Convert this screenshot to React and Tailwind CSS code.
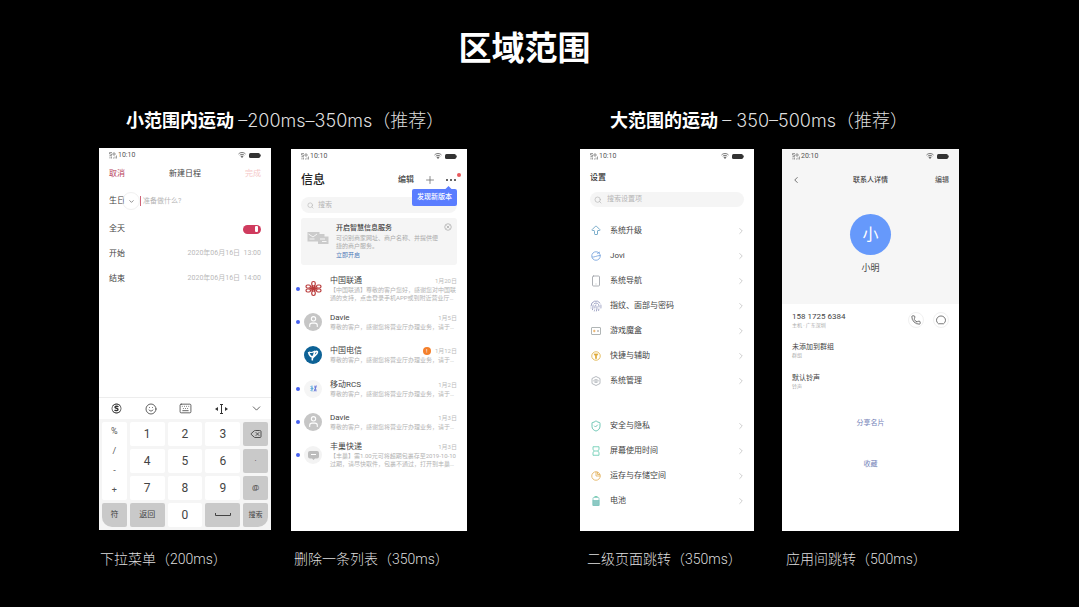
import React from "react";
import {
  Search, Plus, ChevronDown, ChevronRight, ChevronLeft, Smile, Keyboard, Delete, Phone,
  ArrowBigUp, Smartphone, Fingerprint, ShieldCheck, User,
} from "lucide-react";

const FONT = "font-['Inter','Noto_Sans_CJK_SC',sans-serif]";
const PHONE_FONT = "font-['Roboto','Noto_Sans_CJK_SC',sans-serif]";

function StatusBar({ time }) {
  return (
    <div className="flex h-[14px] items-center justify-between px-[10px] text-[7px] leading-none text-[#555]">
      <div className="flex items-center gap-px">
        <svg className="h-[7px] w-[8px]" viewBox="0 0 16 14" fill="none" stroke="#777" strokeWidth="1.4" aria-hidden="true">
          <path d="M1 1h5M1 1v3h4v3H1M8 2h4v4H8zM2 9v4M5 9v4M9 11v2M12 9v4M15 7v6" />
        </svg>
        <span>{time}</span>
      </div>
      <div className="flex items-center gap-[3px]">
        <svg className="h-[6px] w-[8px]" viewBox="0 0 16 12" fill="none" stroke="#555" strokeWidth="1.6" aria-hidden="true">
          <path d="M1 4C5 0 11 0 15 4M3.500 6.500c3-2.500 6-2.500 9 0" />
          <path d="M6 9l2 2 2-2c-1-1-3-1-4 0z" fill="#555" />
        </svg>
        <svg className="h-[5px] w-[12px]" viewBox="0 0 24 10" aria-hidden="true">
          <rect x="0" y="0" width="22" height="10" rx="3" fill="#333" />
          <rect x="22.500" y="3" width="1.500" height="4" fill="#333" />
        </svg>
      </div>
    </div>
  );
}

function Screen({ children, caption, indent, first }) {
  return (
    <figure className={`flex min-w-0 flex-col ${first ? "gap-[18px]" : "gap-[17px] pt-px"}`}>
      <div className={`${PHONE_FONT} flex min-h-[382px] flex-1 flex-col bg-white text-[8px] text-[#444]`}>{children}</div>
      <figcaption className={`${indent} ${PHONE_FONT} text-[14px] leading-[22px] font-light whitespace-nowrap text-[#dedede]`}>{caption}</figcaption>
    </figure>
  );
}

function CandidateIcon() {
  return (
    <svg className="h-[11px] w-[11px]" viewBox="0 0 22 22" fill="none" stroke="#333" aria-hidden="true">
      <circle cx="11" cy="11" r="9" strokeWidth="1.500" />
      <path d="M3 6c4-5 12-5 16 0M3 16c4 5 12 5 16 0" strokeWidth="1.500" />
      <path d="M15 7.500c-3-2-7-1-7 1s6 2 6 4.500-5 3-7 1" strokeWidth="2.800" />
    </svg>
  );
}

const KEY = "flex items-center justify-center rounded-[2px] h-6";
const WHITE = "bg-white text-[12px] text-[#444]";
const GREY = "bg-[#c9c9c9] text-[8px] text-[#444]";

function Keypad() {
  return (
    <div className="grid grid-cols-[25fr_35fr_35fr_35fr_25fr] gap-[3px] bg-[#f5f5f5] p-[3px]">
      <div className="row-span-3 flex flex-col justify-around rounded-[2px] bg-white text-[9px] leading-none text-[#555]">
        {["%", "/", "-", "+"].map((s) => (
          <button key={s} type="button">{s}</button>
        ))}
      </div>
      {["1", "2", "3"].map((n) => <button key={n} type="button" className={`${KEY} ${WHITE}`}>{n}</button>)}
      <button type="button" aria-label="删除" className={`${KEY} ${GREY}`}><Delete size={12} strokeWidth={1.8} /></button>
      {["4", "5", "6"].map((n) => <button key={n} type="button" className={`${KEY} ${WHITE}`}>{n}</button>)}
      <button type="button" className={`${KEY} ${GREY}`}>·</button>
      {["7", "8", "9"].map((n) => <button key={n} type="button" className={`${KEY} ${WHITE}`}>{n}</button>)}
      <button type="button" className={`${KEY} ${GREY}`}>@</button>
      <button type="button" className={`${KEY} ${GREY} rounded-bl-[10px]`}>符</button>
      <button type="button" className={`${KEY} ${GREY}`}>返回</button>
      <button type="button" className={`${KEY} ${WHITE}`}>0</button>
      <button type="button" aria-label="空格" className={`${KEY} ${GREY}`}>
        <svg className="h-[4px] w-4" viewBox="0 0 16 4" fill="none" stroke="#444" aria-hidden="true"><path d="M.5 0v2.500h15V0" /></svg>
      </button>
      <button type="button" className="flex h-6 items-center justify-center rounded-[2px] rounded-br-[10px] bg-[#c9c9c9] text-[7px] text-[#444]">搜索</button>
    </div>
  );
}

function CalendarScreen() {
  return (
    <>
      <StatusBar time="10:10" />
      <div className="grid h-[23px] grid-cols-3 items-center px-[10px]">
        <button type="button" className="justify-self-start text-[#b8425c]">取消</button>
        <h3 className="justify-self-center">新建日程</h3>
        <button type="button" className="justify-self-end text-[#f5c9c9]">完成</button>
      </div>
      <div className="flex h-8 items-center px-[10px]">
        <span>生日</span>
        <button type="button" aria-label="选择类型" className="-ml-[3px] flex h-[18px] w-[18px] items-center justify-center rounded-full border border-[#f1f1f1]">
          <ChevronDown size={7} />
        </button>
        <input aria-label="日程内容" placeholder="准备做什么?" className="h-[10px] min-w-0 flex-1 border-l border-[#cf6478] pl-[2px] text-[7px] outline-none placeholder:text-[#b5b5b5]" />
      </div>
      <label className="flex h-6 items-center justify-between px-[10px]">
        <span>全天</span>
        <span className="flex h-[9px] w-[18px] items-center justify-end rounded-full bg-[#cf3b5e] px-[3px]">
          <input type="checkbox" role="switch" defaultChecked className="h-[6px] w-[3px] appearance-none rounded-[1px] bg-white" />
        </span>
      </label>
      {[["开始", "2020年06月16日  13:00"], ["结束", "2020年06月16日  14:00"]].map(([k, v]) => (
        <div key={k} className="flex h-[25px] items-center justify-between px-[10px]">
          <span>{k}</span>
          <time className="text-[7px] whitespace-pre text-[#b9b9b9]">{v}</time>
        </div>
      ))}
      <div className="mt-auto">
        <div className="flex h-[22px] items-center justify-between border-t border-[#ededed] pr-[8px] pl-3 text-[#444]">
          <CandidateIcon />
          <Smile size={12} strokeWidth={1.7} />
          <Keyboard size={13} strokeWidth={1.5} />
          <svg className="h-[10px] w-[13px]" viewBox="0 0 13 10" aria-hidden="true">
            <path d="M5 .5h3M5 9.500h3M6.500.5v9" stroke="#333" fill="none" />
            <path d="M0 5l3-2v4zM13 5l-3-2v4z" fill="#333" />
          </svg>
          <ChevronDown size={13} strokeWidth={1.5} />
        </div>
        <Keypad />
      </div>
    </>
  );
}

function UnicomMark() {
  return (
    <svg className="h-[17px] w-[17px]" viewBox="0 0 34 34" fill="none" stroke="#b93a3a" strokeWidth="2.400" aria-hidden="true">
      <rect x="13.500" y="3" width="7" height="9" rx="3.500" /><rect x="13.500" y="22" width="7" height="9" rx="3.500" />
      <rect x="2" y="10" width="9" height="6" rx="3" /><rect x="23" y="10" width="9" height="6" rx="3" />
      <rect x="2" y="18" width="9" height="6" rx="3" /><rect x="23" y="18" width="9" height="6" rx="3" />
      <path d="M11 13l6 4 6-4M11 21l6-4 6 4M14 11l3 6 3-6M14 23l3-6 3 6M9 17h16" />
    </svg>
  );
}

function TelecomMark() {
  return (
    <svg className="h-[18px] w-[18px]" viewBox="0 0 36 36" aria-hidden="true">
      <circle cx="18" cy="18" r="18" fill="#0d6296" />
      <path d="M9 12c2 8 6 11 9 9 3-2 1-6 4-9 2-2 5-2 5 0 0 4-4 6-9 11-2 2-2 4-1 6" fill="none" stroke="#fff" strokeWidth="3.200" />
      <path d="M10 12c4 2 8 1 12-2" fill="none" stroke="#fff" strokeWidth="2.400" />
    </svg>
  );
}

function Avatar({ kind }) {
  if (kind === "unicom") return <UnicomMark />;
  if (kind === "telecom") return <TelecomMark />;
  if (kind === "user")
    return (
      <span className="flex h-[18px] w-[18px] items-center justify-center rounded-full bg-[#c6c6c6] text-white"><User size={13} strokeWidth={2} /></span>
    );
  if (kind === "rcs")
    return (
      <span className="flex h-[18px] w-[18px] items-center justify-center rounded-full bg-[#f5f5f5]">
        <svg className="h-[7px] w-[7px]" viewBox="0 0 14 14" fill="none" strokeWidth="1.600" aria-hidden="true">
          <path d="M1 2l5 5-5 5M4 1v12M1 7h5" stroke="#4fa3d9" />
          <path d="M8 4h5M8 10h5M10 1l2 12M13 1L8 13" stroke="#6271d8" />
        </svg>
      </span>
    );
  return (
    <span className="flex h-[18px] w-[18px] items-center justify-center rounded-full bg-[#f3f3f3]">
      <svg className="h-[9px] w-[11px]" viewBox="0 0 22 18" aria-hidden="true">
        <path d="M4 0h14a4 4 0 014 4v7a4 4 0 01-4 4h-4l-3 3-3-3H4a4 4 0 01-4-4V4a4 4 0 014-4z" fill="#bdbdbd" />
        <path d="M6 7h10" stroke="#fff" strokeWidth="2" />
      </svg>
    </span>
  );
}

const PREVIEW = "尊敬的客户，感谢您将营业厅办理业务，请于…";
const MESSAGES = [
  { name: "中国联通", date: "1月20日", kind: "unicom", unread: true, lines: ["【中国联通】尊敬的客户您好，感谢您对中国联", "通的支持，点击登录手机APP或到附近营业厅…"] },
  { name: "Davie", date: "1月5日", kind: "user", unread: true, lines: [PREVIEW] },
  { name: "中国电信", date: "1月12日", kind: "telecom", alert: true, lines: [PREVIEW] },
  { name: "移动RCS", date: "1月2日", kind: "rcs", unread: true, lines: [PREVIEW] },
  { name: "Davie", date: "1月3日", kind: "user", unread: true, lines: [PREVIEW] },
  { name: "丰巢快递", date: "1月3日", kind: "parcel", unread: true, lines: ["【丰巢】需1.00元可将超期包裹存至2019-10-10", "过期，请尽快取件，包裹不通过，打开到丰巢…"] },
];

function MessagesScreen() {
  return (
    <>
      <StatusBar time="10:10" />
      <div className="flex h-[34px] items-center px-[10px]">
        <h3 className="mr-auto text-[12px] font-medium text-[#222]">信息</h3>
        <button type="button" className="mr-[10px] font-medium">编辑</button>
        <button type="button" aria-label="新建" className="mr-[10px] text-[#666]"><Plus size={12} strokeWidth={1.5} /></button>
        <div className="relative flex">
          <button type="button" aria-label="更多" className="flex h-3 w-[11px] items-center gap-[2px]">
            <i className="h-[2px] w-[2px] rounded-full bg-[#333]" /><i className="h-[2px] w-[2px] rounded-full bg-[#333]" /><i className="h-[2px] w-[2px] rounded-full bg-[#333]" />
          </button>
          <span className="absolute -top-[1px] -right-[4px] h-1 w-1 rounded-full bg-[#e8575a]" />
          <div role="tooltip" className="absolute top-[15px] right-0 z-10 flex h-[17px] w-[45px] items-center justify-center rounded-[2px] bg-[#5a7dff] text-[7px] font-medium whitespace-nowrap text-white">
            <span className="absolute -top-[2px] right-[6px] h-[5px] w-[5px] rotate-45 bg-[#5a7dff]" />
            <span className="relative">发现新版本</span>
          </div>
        </div>
      </div>
      <label className="mx-[10px] flex h-4 items-center gap-[4px] rounded-full bg-[#f5f5f5] px-[6px] text-[#b5b5b5]">
        <Search size={7} />
        <input type="search" aria-label="搜索" placeholder="搜索" className="min-w-0 flex-1 text-[7px] outline-none placeholder:text-[#b5b5b5]" />
      </label>
      <section className="mx-[10px] mt-[5px] flex min-h-[47px] rounded-[3px] bg-[#f5f5f5] py-[5px] pr-[5px] pl-[6px]">
        <svg className="mt-[7px] h-[15px] w-[22px] shrink-0" viewBox="0 0 44 30" aria-hidden="true">
          <path d="M1 4h24v4h10v5h8v15H22v-5H1z" fill="#cbcbcb" />
          <path d="M3 8l9 6 8-6M5 18h10M26 18h10M30 23h9" fill="none" stroke="#f5f5f5" strokeWidth="2" />
        </svg>
        <div className="ml-[7px] min-w-0 flex-1 text-[6px] leading-[8px] whitespace-nowrap text-[#aaa]">
          <h4 className="text-[7px] leading-[11px] font-medium text-[#444]">开启智慧信息服务</h4>
          <p>可识别商家网址、商户名称、并提供便</p>
          <p>捷的商户服务。</p>
          <a href="#enable" className="block leading-[10px] text-[#4b78b8]">立即开启</a>
        </div>
        <button type="button" aria-label="关闭" className="h-[8px] w-[8px] shrink-0">
          <svg viewBox="0 0 16 16" fill="none" stroke="#aaa" strokeWidth="1.500" aria-hidden="true"><circle cx="8" cy="8" r="6.500" /><path d="M5 5l6 6M11 5l-6 6" /></svg>
        </button>
      </section>
      <ul className="mt-[7px] grid h-[200px] auto-rows-fr grid-cols-1">
        {MESSAGES.map((m, i) => (
          <li key={i} className="flex min-w-0 items-center pr-[10px] pl-[5px]">
            <span className={`h-[4px] w-[4px] shrink-0 rounded-full ${m.unread ? "bg-[#4560ee]" : ""}`} />
            <span className="mx-[4px] flex w-[18px] shrink-0 justify-center"><Avatar kind={m.kind} /></span>
            <div className="ml-[4px] min-w-0 flex-1">
              <div className="flex items-center gap-1 leading-[10px]">
                <h4 className="mr-auto">{m.name}</h4>
                {m.alert && <span className="flex h-[8px] w-[8px] items-center justify-center rounded-full bg-[#f47f2b] text-[6px] leading-none text-white">!</span>}
                <time className="text-[6px] text-[#bbb]">{m.date}</time>
              </div>
              <div className="text-[6px] leading-[8px] whitespace-nowrap text-[#b3b3b3]">
                {m.lines.map((l) => <p key={l}>{l}</p>)}
              </div>
            </div>
          </li>
        ))}
      </ul>
    </>
  );
}

const ICON = "h-[10px] w-[10px]";

function Outline({ color, children }) {
  return <svg className={ICON} viewBox="0 0 20 20" fill="none" stroke={color} strokeWidth="1.600" aria-hidden="true">{children}</svg>;
}

const SETTINGS = [
  [
    ["系统升级", <ArrowBigUp size={13} strokeWidth={1.8} color="#6ba3c4" />],
    ["Jovi", <Outline color="#6f9ddb"><circle cx="10" cy="10" r="8.500" /><path d="M2 12c5 1 9-3 17-3M12 5l6-3" /></Outline>],
    ["系统导航", <Smartphone size={12} strokeWidth={1.8} color="#a4a7ad" />],
    ["指纹、面部与密码", <Fingerprint size={12} strokeWidth={1.8} color="#9499bd" />],
    ["游戏魔盒", <Outline color="#9da3a3"><rect x="1" y="3" width="18" height="14" rx="1" /><path d="M4 10h5M6.500 7.500v5" stroke="#e8a24a" /><path d="M12 10h4" stroke="#777" /></Outline>],
    ["快捷与辅助", <Outline color="#dfb03f"><circle cx="10" cy="10" r="8.500" /><path d="M6 6h8l-3 4v5H9v-5z" fill="#e2a33d" /></Outline>],
    ["系统管理", <Outline color="#a5a9b0"><path d="M10 1l8 4v10l-8 4-8-4V5z" /><path d="M5 10c3-4 7-4 10 0-3 4-7 4-10 0z" /><circle cx="10" cy="10" r="1" /></Outline>],
  ],
  [
    ["安全与隐私", <ShieldCheck size={12} strokeWidth={1.8} color="#5fc1ad" />],
    ["屏幕使用时间", <Outline color="#5fc9ad"><path d="M4 1.500h12v6l-3 2.500 3 2.500v6H4v-6L7 10 4 7.500zM7 10h6" /></Outline>],
    ["运存与存储空间", <Outline color="#e2ae55"><circle cx="10" cy="10" r="8.500" /><path d="M10 1.500V10h8.500M13 2v5h5" /></Outline>],
    ["电池", <Outline color="#7fc5bd"><rect x="4" y="3" width="12" height="16" rx="1.500" /><path d="M7 1h6" stroke="#57c59d" /><rect x="4" y="9" width="12" height="10" fill="#8dc9c4" /></Outline>],
  ],
];

function SettingsScreen() {
  return (
    <>
      <StatusBar time="10:10" />
      <h3 className="flex h-[29px] items-center px-[10px] font-medium text-[#333]">设置</h3>
      <label className="mx-[10px] flex h-[15px] items-center gap-[5px] rounded-full bg-[#f5f5f5] px-[4px] text-[#b5b5b5]">
        <Search size={8} />
        <input type="search" aria-label="搜索设置项" placeholder="搜索设置项" className="min-w-0 flex-1 text-[7px] outline-none placeholder:text-[#b5b5b5]" />
      </label>
      <nav className="mt-[11px] flex flex-col gap-5">
        {SETTINGS.map((group, g) => (
          <ul key={g}>
            {group.map(([label, icon]) => (
              <li key={label}>
                <a href="#setting" className="flex h-[25px] items-center pr-[8px] pl-[10px]">
                  <span className="mr-[8px] flex w-3 justify-center">{icon}</span>
                  <span className="mr-auto">{label}</span>
                  <ChevronRight size={10} strokeWidth={1.5} color="#b0b0b0" />
                </a>
              </li>
            ))}
          </ul>
        ))}
      </nav>
    </>
  );
}

function ContactScreen() {
  return (
    <>
      <header className="h-[155px] bg-[#f6f6f6]">
        <StatusBar time="20:10" />
        <div className="grid h-[34px] grid-cols-3 items-center px-[10px]">
          <button type="button" aria-label="返回" className="-ml-px"><ChevronLeft size={10} strokeWidth={1.8} /></button>
          <h3 className="justify-self-center text-[7px] font-medium">联系人详情</h3>
          <button type="button" className="justify-self-end text-[7px]">编辑</button>
        </div>
        <div className="mx-auto mt-[17px] flex h-[41px] w-[41px] items-center justify-center rounded-full bg-[#6699fb] text-[16px] text-white">小</div>
        <p className="mt-[7px] text-center text-[9px] leading-3">小明</p>
      </header>
      <div className="flex items-center gap-[9px] px-[10px] pt-[8px]">
        <div className="mr-auto">
          <p className="leading-[10px]">158 1725 6384</p>
          <p className="text-[5px] leading-[6px] text-[#aaa]">主机 · 广东深圳</p>
        </div>
        <button type="button" aria-label="拨打电话" className="flex h-4 w-4 items-center justify-center rounded-full border border-[#f1f1f1]"><Phone size={10} strokeWidth={1.8} /></button>
        <button type="button" aria-label="发送信息" className="flex h-4 w-4 items-center justify-center rounded-full border border-[#f1f1f1]">
          <svg className={ICON} viewBox="0 0 20 20" fill="none" stroke="#555" strokeWidth="1.600" aria-hidden="true"><path d="M5 17.500A9 8.500 0 1115 17.500L5 17.500" /></svg>
        </button>
      </div>
      {[["未添加到群组", "群组"], ["默认铃声", "铃声"]].map(([k, v]) => (
        <div key={k} className="px-[10px] pt-[15px]">
          <p className="text-[7px] leading-[9px]">{k}</p>
          <p className="text-[5px] leading-[7px] text-[#aaa]">{v}</p>
        </div>
      ))}
      <button type="button" className="mt-[25px] h-4 text-[7px] text-[#7482b8]">分享名片</button>
      <button type="button" className="mt-[25px] h-4 text-[7px] text-[#7482b8]">收藏</button>
    </>
  );
}

export default function App() {
  return (
    <main className={`${FONT} min-h-screen overflow-x-hidden bg-black pb-8 text-white`} lang="zh-CN">
      <h1 className="pt-[23px] pr-[30px] text-center text-[33px] leading-[50px] font-bold">区域范围</h1>
      <div className="mt-[35px] grid grid-cols-[368fr_379fr] gap-[113px] pr-[120px] pl-[99px]">
        <section>
          <h2 className="pl-[27px] text-[18px] leading-[26px] font-bold whitespace-nowrap">
            小范围内运动 <span className="font-light text-[#dedede]">–200ms–350ms（推荐）</span>
          </h2>
          <div className="mt-[14px] grid grid-cols-[172fr_176fr] gap-5">
            <Screen first caption="下拉菜单（200ms）" indent="pl-[1px]"><CalendarScreen /></Screen>
            <Screen caption="删除一条列表（350ms）" indent="pl-[3px]"><MessagesScreen /></Screen>
          </div>
        </section>
        <section>
          <h2 className="pl-[30px] text-[18px] leading-[26px] font-bold whitespace-nowrap">
            大范围的运动 <span className="font-light text-[#dedede]">– 350–500ms（推荐）</span>
          </h2>
          <div className="mt-[14px] grid grid-cols-[174fr_177fr] gap-7">
            <Screen caption="二级页面跳转（350ms）" indent="pl-[7px]"><SettingsScreen /></Screen>
            <Screen caption="应用间跳转（500ms）" indent="pl-[4px]"><ContactScreen /></Screen>
          </div>
        </section>
      </div>
    </main>
  );
}
